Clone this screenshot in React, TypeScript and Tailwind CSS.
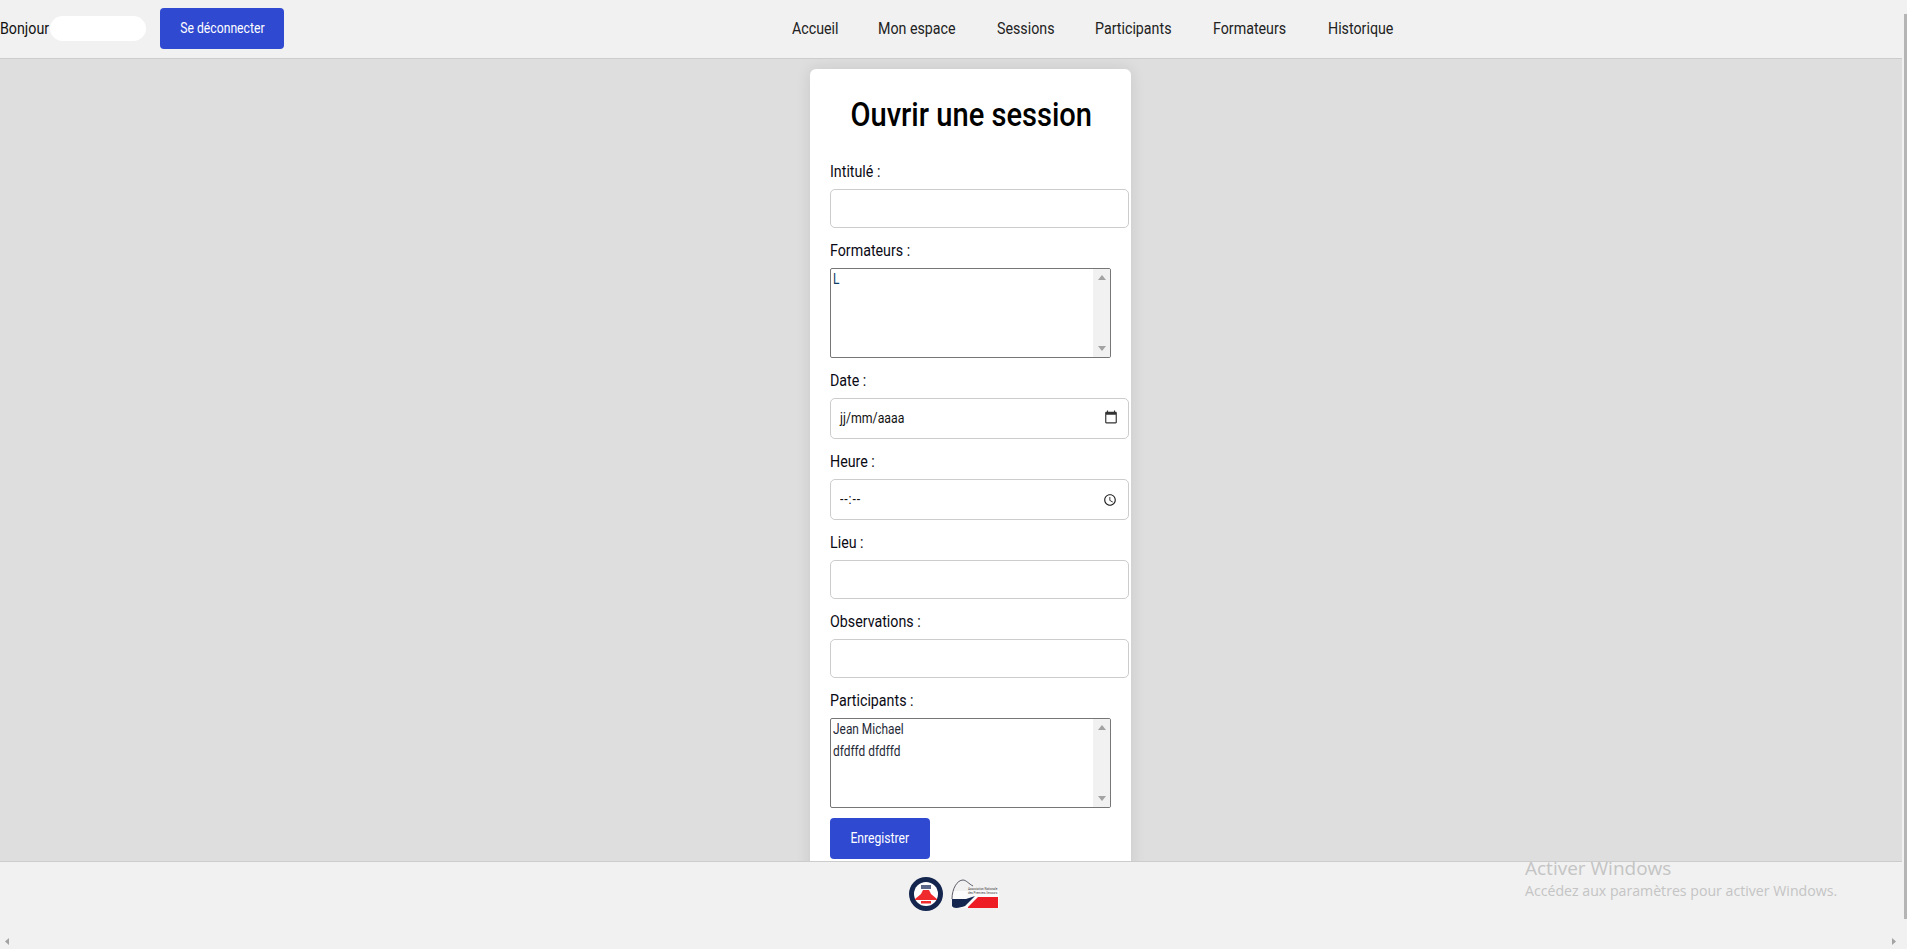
const navLinks = [
  { label: 'Accueil', width: 'w-[46px]' },
  { label: 'Mon espace', width: 'w-[79px]' },
  { label: 'Sessions', width: 'w-[58px]' },
  { label: 'Participants', width: 'w-[78px]' },
  { label: 'Formateurs', width: 'w-[75px]' },
  { label: 'Historique', width: 'w-[69px]' },
];

function Narrow({ children }: { children: string }) {
  return <span className="inline-block origin-left scale-x-[.89] whitespace-nowrap">{children}</span>;
}

function FakeListbox({ options, tall, tone }: { options: string[]; tall?: boolean; tone: string }) {
  return (
    <div className={`flex h-[90px] w-[281px] overflow-hidden rounded-[2px] border border-[#767676] bg-white ${tall ? 'mb-[10px]' : 'mb-[11px]'}`}>
      <div className={`-mt-[1px] flex-1 pl-[2px] text-[14px] leading-[22px] ${tone}`}>
        {options.map((o) => (
          <div key={o} className="origin-left scale-x-[.85] whitespace-nowrap">{o}</div>
        ))}
      </div>
      <div className="flex w-[17px] flex-col items-center justify-between bg-[#f1f1f1] py-[6px]">
        <svg width="8" height="5" viewBox="0 0 8 5"><path d="M4 0 8 5H0z" fill="#a3a3a3" /></svg>
        <svg width="8" height="5" viewBox="0 0 8 5"><path d="M0 0h8L4 5z" fill="#a3a3a3" /></svg>
      </div>
    </div>
  );
}

function Label({ children }: { children: string }) {
  return (
    <label className="mb-[5px] block h-[24px] text-[16px] leading-[24px] text-[#0a0a14]">
      <Narrow>{children}</Narrow>
    </label>
  );
}

function TextField() {
  return <input type="text" className="mb-[11px] block h-[39px] w-[299px] rounded-[5px] border border-[#cccccc] bg-white outline-none" />;
}

function PickerField({ value, icon, spaced }: { value: string; icon: React.ReactNode; spaced?: boolean }) {
  return (
    <div className="mb-[11px] flex h-[41px] w-[299px] items-center justify-between rounded-[5px] border border-[#cccccc] bg-white pl-[9px] pr-[10px] text-[14px] text-[#111]">
      <span className={`inline-block origin-left scale-x-[.88] whitespace-nowrap ${spaced ? 'tracking-[1px]' : ''}`}>{value}</span>
      {icon}
    </div>
  );
}

function BlueButton({ children, className }: { children: string; className: string }) {
  return (
    <button className={`rounded-[4px] bg-[#2f49d1] text-[14px] text-white ${className}`}>
      <span className="inline-block scale-x-[.87] whitespace-nowrap">{children}</span>
    </button>
  );
}

export default function App() {
  return (
    <div className="relative flex h-[949px] w-[1907px] overflow-hidden bg-[#f1f1f1] font-[Roboto,sans-serif]">
      <div className="flex h-full w-[1902px] flex-col">
        <header className="flex h-[59px] shrink-0 items-center border-b border-[#cccccc] bg-[#f1f1f1] pb-[1px]">
          <span className="w-[50px] text-[16px] text-[#111]">
            <Narrow>Bonjour</Narrow>
          </span>
          <span className="h-[25px] w-[96px] rounded-full bg-white" />
          <BlueButton className="ml-[14px] h-[41px] w-[124px]">Se déconnecter</BlueButton>
          <nav className="ml-[508px] flex gap-[40px] text-[16px] text-[#222]">
            {navLinks.map((l) => (
              <a key={l.label} href="#" className={l.width}>
                <Narrow>{l.label}</Narrow>
              </a>
            ))}
          </nav>
        </header>

        <main className="flex min-h-0 flex-1 justify-center overflow-hidden bg-[#dedede] pl-[39px]">
          <div className="mt-[10px] h-[830px] w-[321px] rounded-[6px] bg-white px-[20px] shadow-[0_0_15px_rgba(0,0,0,0.1)]">
            <h1 className="mb-[25px] h-[66px] whitespace-nowrap pt-[24px] text-center text-[34px] font-medium leading-[42px] text-black">
              <span className="inline-block scale-x-[.855]">Ouvrir une session</span>
            </h1>
            <Label>Intitulé :</Label>
            <TextField />
            <Label>Formateurs :</Label>
            <FakeListbox options={['L']} tone="text-[#0b3f66]" />
            <Label>Date :</Label>
            <PickerField
              value="jj/mm/aaaa"
              icon={
                <svg width="14" height="14" viewBox="0 0 24 24" fill="#333" className="-mt-[3px]">
                  <path d="M20 3h-1V1h-2v2H7V1H5v2H4c-1.1 0-2 .9-2 2v16c0 1.1.9 2 2 2h16c1.1 0 2-.9 2-2V5c0-1.1-.9-2-2-2zm0 18H4V8h16v13z" />
                </svg>
              }
            />
            <Label>Heure :</Label>
            <PickerField
              value="--:--"
              spaced
              icon={
                <svg width="14" height="14" viewBox="0 0 24 24" fill="#222" className="mr-[1px]">
                  <path d="M11.99 2C6.47 2 2 6.48 2 12s4.47 10 9.99 10C17.52 22 22 17.52 22 12S17.52 2 11.99 2zM12 20c-4.42 0-8-3.58-8-8s3.58-8 8-8 8 3.58 8 8-3.58 8-8 8zm.5-13H11v6l5.25 3.15.75-1.23-4.5-2.67z" />
                </svg>
              }
            />
            <Label>Lieu :</Label>
            <TextField />
            <Label>Observations :</Label>
            <TextField />
            <Label>Participants :</Label>
            <FakeListbox options={['Jean Michael', 'dfdffd dfdffd']} tall tone="text-[#1f2937]" />
            <BlueButton className="h-[41px] w-[100px]">Enregistrer</BlueButton>
          </div>
        </main>

        <footer className="flex h-[88px] shrink-0 items-start justify-center gap-[8px] border-t border-[#cccccc] bg-[#f1f1f1] pl-[5px] pt-[15px]">
          <svg width="34" height="34" viewBox="0 0 34 34">
            <circle cx="17" cy="17" r="17" fill="#14264e" />
            <circle cx="17" cy="17" r="12" fill="#fff" />
            <path d="M6 22 12 17 14 13h6l2 4 6 5v1H6z" fill="#ef2b2d" />
            <rect x="12" y="8" width="10" height="4" fill="#5a6788" />
            <rect x="12" y="24" width="10" height="2.5" fill="#ef2b2d" />
          </svg>
          <svg width="48" height="30" viewBox="0 0 48 30" className="mt-[2px]">
            <rect x="1" y="12" width="47" height="17" fill="#fff" opacity="0.7" />
            <path d="M1 20C1 10 6 1 12 1c3 0 6 4 10 6" fill="none" stroke="#1a1a2e" strokeWidth="0.7" />
            <path d="M1 20h14l9-3-10 10c-5 2-12 3-13 0z" fill="#14264e" />
            <path d="M17 28 27 18h20v11H17z" fill="#ee1c25" />
            <text x="17" y="11" fontSize="3" fill="#444">Association Nationale</text>
            <text x="17" y="15" fontSize="3" fill="#444">des Premiers Secours</text>
          </svg>
        </footer>
      </div>

      {/* browser scrollbars and the watermark sit over the page */}
      <div className="absolute right-0 top-[14px] h-[905px] w-[3px] bg-[#b5b5b5]" />
      <svg className="absolute bottom-[4px] left-[5px]" width="4" height="7" viewBox="0 0 4 7"><path d="M4 0v7L0 3.5z" fill="#a3a3a3" /></svg>
      <svg className="absolute bottom-[4px] left-[1892px]" width="4" height="7" viewBox="0 0 4 7"><path d="M0 0v7l4-3.5z" fill="#a3a3a3" /></svg>
      <div className="absolute left-[1525px] top-[855px] font-['Open_Sans',sans-serif] text-[#c4c4c4]">
        <div className="text-[19px] leading-[26px]">Activer Windows</div>
        <div className="text-[14.15px] leading-[20px]">Accédez aux paramètres pour activer Windows.</div>
      </div>
    </div>
  );
}
